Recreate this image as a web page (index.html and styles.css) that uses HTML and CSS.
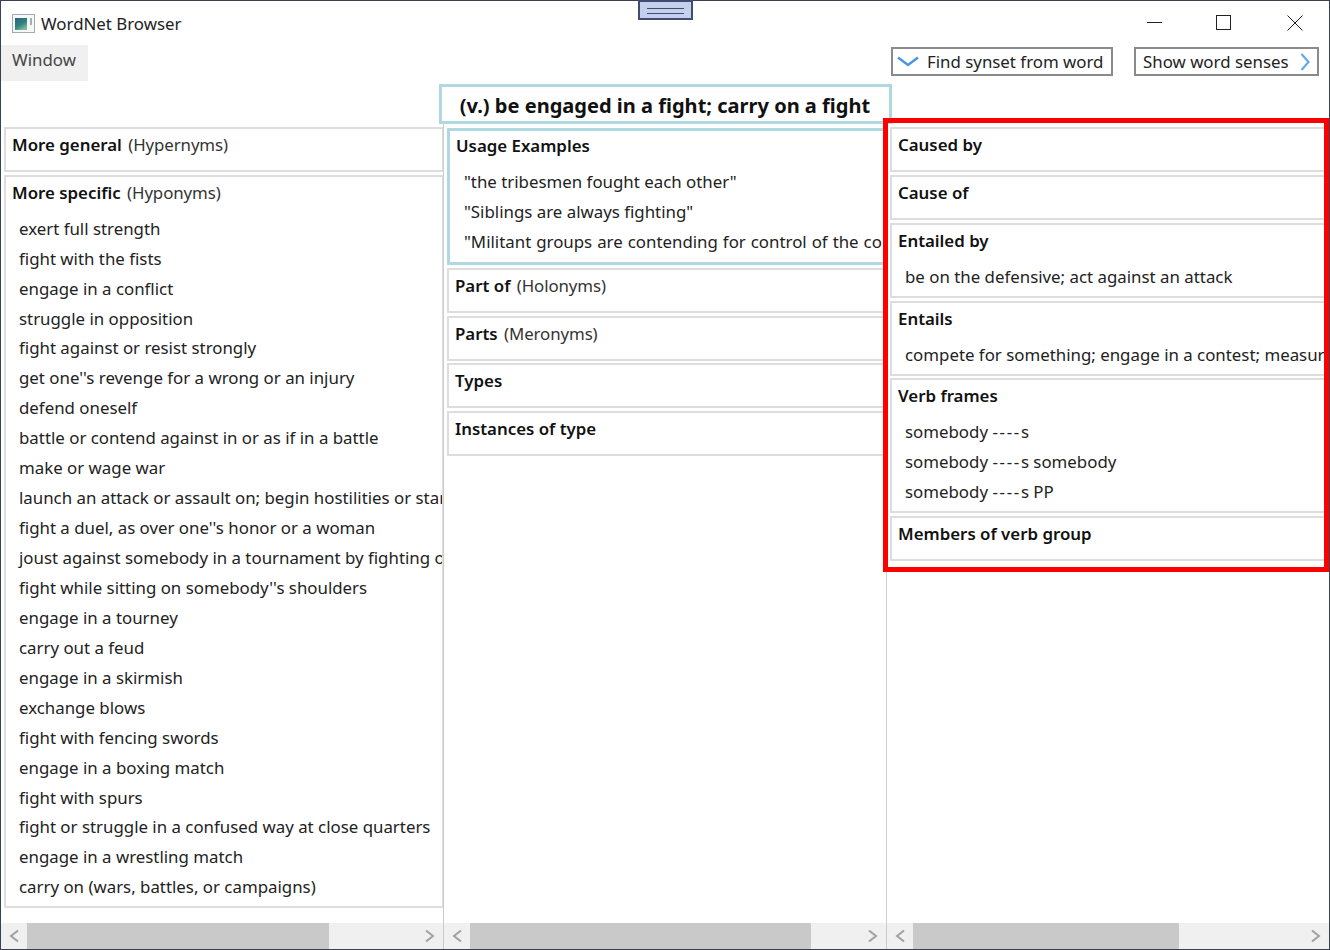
FILE: index.html
```html
<!DOCTYPE html>
<html lang="en">

<head>
    <meta charset="UTF-8">
    <title>WordNet Browser</title>
    <link rel="stylesheet" href="styles.css">
</head>

<body>
    <div class="window">
        <!-- Title bar -->
        <div class="title-bar">
            <svg class="app-icon" width="23" height="20" viewBox="0 0 23 20">
                <defs>
                    <linearGradient id="icon-fill" x1="0" y1="0" x2="0.6" y2="1">
                        <stop offset="0" stop-color="#2a5f8f"/>
                        <stop offset="0.6" stop-color="#2f8478"/>
                        <stop offset="1" stop-color="#7fb5a4"/>
                    </linearGradient>
                </defs>
                <rect x="0.5" y="0.5" width="22" height="18" fill="#f6f7f7" stroke="#a3abaf"/>
                <rect x="3" y="4" width="12" height="12" fill="url(#icon-fill)"/>
                <rect x="18" y="4" width="2" height="7" fill="#9fb3ae"/>
            </svg>
            <span class="app-name">WordNet Browser</span>
            <div class="window-buttons">
                <svg width="16" height="16" viewBox="0 0 16 16"><path d="M0 7.5H15" stroke="#222"/></svg>
                <svg class="maximize" width="16" height="16" viewBox="0 0 16 16"><rect x="0.5" y="0.5" width="14" height="14" fill="none" stroke="#222"/></svg>
                <svg width="16" height="16" viewBox="0 0 16 16"><path d="M0.5 0.5L15.5 15.5M15.5 0.5L0.5 15.5" stroke="#222"/></svg>
            </div>
        </div>

        <!-- Menu and buttons -->
        <div class="tool-row">
            <div class="menu-item">Window</div>
            <div class="tool-buttons">
                <button class="tool-button find-button">
                    <svg width="22" height="11" viewBox="0 0 22 11"><path d="M1 1.5L11 9L21 1.5" fill="none" stroke="#4a94e8" stroke-width="2.4"/></svg>
                    Find synset from word
                </button>
                <button class="tool-button senses-button">
                    Show word senses
                    <svg width="10" height="18" viewBox="0 0 10 18"><path d="M1.5 1L8.5 9L1.5 17" fill="none" stroke="#6aa6e8" stroke-width="2.2"/></svg>
                </button>
            </div>
        </div>

        <div class="gloss">(v.) be engaged in a fight; carry on a fight</div>

        <div class="columns">
            <!-- Left column -->
            <div class="column">
                <div class="column-body">
                    <div class="panel">
                        <div class="panel-head"><b>More general</b> <span class="note">(Hypernyms)</span></div>
                    </div>
                    <div class="panel hyponyms">
                        <div class="panel-head"><b>More specific</b> <span class="note">(Hyponyms)</span></div>
                        <ul class="panel-items">
                            <li>exert full strength</li>
                            <li>fight with the fists</li>
                            <li>engage in a conflict</li>
                            <li>struggle in opposition</li>
                            <li>fight against or resist strongly</li>
                            <li>get one''s revenge for a wrong or an injury</li>
                            <li>defend oneself</li>
                            <li>battle or contend against in or as if in a battle</li>
                            <li>make or wage war</li>
                            <li>launch an attack or assault on; begin hostilities or start warfare with</li>
                            <li>fight a duel, as over one''s honor or a woman</li>
                            <li>joust against somebody in a tournament by fighting on horseback</li>
                            <li>fight while sitting on somebody''s shoulders</li>
                            <li>engage in a tourney</li>
                            <li>carry out a feud</li>
                            <li>engage in a skirmish</li>
                            <li>exchange blows</li>
                            <li>fight with fencing swords</li>
                            <li>engage in a boxing match</li>
                            <li>fight with spurs</li>
                            <li>fight or struggle in a confused way at close quarters</li>
                            <li>engage in a wrestling match</li>
                            <li>carry on (wars, battles, or campaigns)</li>
                        </ul>
                    </div>
                </div>
                <div class="scrollbar">
                    <svg class="arrow" width="26" height="14" viewBox="0 0 26 14"><path d="M17 1.5L10 7L17 12.5" fill="none" stroke="#a0a0a0" stroke-width="2"/></svg>
                    <div class="thumb thumb-left"></div>
                    <svg class="arrow arrow-end" width="26" height="14" viewBox="0 0 26 14"><path d="M9 1.5L16 7L9 12.5" fill="none" stroke="#a0a0a0" stroke-width="2"/></svg>
                </div>
            </div>

            <!-- Middle column -->
            <div class="column">
                <div class="column-body">
                    <div class="panel usage-panel">
                        <div class="panel-head"><b>Usage Examples</b></div>
                        <ul class="panel-items">
                            <li>"the tribesmen fought each other"</li>
                            <li>"Siblings are always fighting"</li>
                            <li class="usage-long">"Militant groups are contending for control of the country"</li>
                        </ul>
                    </div>
                    <div class="panel">
                        <div class="panel-head"><b>Part of</b> <span class="note">(Holonyms)</span></div>
                    </div>
                    <div class="panel parts-panel">
                        <div class="panel-head"><b>Parts</b> <span class="note">(Meronyms)</span></div>
                    </div>
                    <div class="panel">
                        <div class="panel-head"><b>Types</b></div>
                    </div>
                    <div class="panel">
                        <div class="panel-head"><b>Instances of type</b></div>
                    </div>
                </div>
                <div class="scrollbar">
                    <svg class="arrow" width="26" height="14" viewBox="0 0 26 14"><path d="M17 1.5L10 7L17 12.5" fill="none" stroke="#a0a0a0" stroke-width="2"/></svg>
                    <div class="thumb thumb-middle"></div>
                    <svg class="arrow arrow-end" width="26" height="14" viewBox="0 0 26 14"><path d="M9 1.5L16 7L9 12.5" fill="none" stroke="#a0a0a0" stroke-width="2"/></svg>
                </div>
            </div>

            <!-- Right column -->
            <div class="column">
                <div class="column-body">
                    <div class="panel">
                        <div class="panel-head"><b>Caused by</b></div>
                    </div>
                    <div class="panel">
                        <div class="panel-head"><b>Cause of</b></div>
                    </div>
                    <div class="panel">
                        <div class="panel-head"><b>Entailed by</b></div>
                        <ul class="panel-items">
                            <li>be on the defensive; act against an attack</li>
                        </ul>
                    </div>
                    <div class="panel">
                        <div class="panel-head"><b>Entails</b></div>
                        <ul class="panel-items">
                            <li>compete for something; engage in a contest; measure oneself against others</li>
                        </ul>
                    </div>
                    <div class="panel frames-panel">
                        <div class="panel-head"><b>Verb frames</b></div>
                        <ul class="panel-items">
                            <li>somebody <span class="dashes">----</span>s</li>
                            <li>somebody <span class="dashes">----</span>s somebody</li>
                            <li>somebody <span class="dashes">----</span>s PP</li>
                        </ul>
                    </div>
                    <div class="panel">
                        <div class="panel-head"><b>Members of verb group</b></div>
                    </div>
                </div>
                <div class="scrollbar">
                    <svg class="arrow" width="26" height="14" viewBox="0 0 26 14"><path d="M17 1.5L10 7L17 12.5" fill="none" stroke="#a0a0a0" stroke-width="2"/></svg>
                    <div class="thumb thumb-right"></div>
                    <svg class="arrow arrow-end" width="26" height="14" viewBox="0 0 26 14"><path d="M9 1.5L16 7L9 12.5" fill="none" stroke="#a0a0a0" stroke-width="2"/></svg>
                </div>
            </div>
        </div>

        <!-- Overlays -->
        <div class="drag-handle"></div>
        <div class="highlight"></div>
    </div>
</body>

</html>
```

FILE: styles.css
```css
* {
    box-sizing: border-box;
}

html,
body {
    margin: 0;
    height: 950px;
    overflow: hidden;
}

body {
    font-family: "Noto Sans", sans-serif;
    font-size: 16.85px;
    color: #222;
    background-color: white;
}

.window {
    position: relative;
    display: flex;
    flex-direction: column;
    height: 950px;
    border: 1px solid #3a4152;
    background-color: white;
}

.title-bar {
    display: flex;
    align-items: center;
    height: 44px;
    padding-left: 11px;
    padding-top: 1px;
}

.app-name {
    margin-left: 6px;
    color: #222;
}

.window-buttons {
    display: flex;
    gap: 54px;
    margin-left: auto;
    margin-right: 26px;
    margin-bottom: 2px;
}

.maximize {
    margin: 0 1px 0 -1px;
}

.tool-row {
    display: flex;
    justify-content: space-between;
    height: 39px;
}

.menu-item {
    width: 87px;
    height: 36px;
    padding-left: 11px;
    line-height: 30px;
    color: #444;
    background-color: #f0f0f0;
}

.tool-buttons {
    display: flex;
    gap: 21px;
    margin-right: 10px;
    padding-top: 2px;
}

.tool-button {
    display: flex;
    align-items: center;
    height: 29px;
    padding: 0;
    font-family: inherit;
    font-size: 16.85px;
    color: #222;
    background-color: white;
    border: 2px solid #8a8a8a;
}

.find-button {
    width: 222px;
    gap: 8px;
    padding-left: 4px;
}

.senses-button {
    width: 185px;
    justify-content: space-between;
    padding: 0 7px;
}

.gloss {
    position: relative;
    z-index: 1;
    width: 453px;
    height: 40px;
    margin: 0 auto;
    font-size: 20.05px;
    font-weight: bold;
    line-height: 37px;
    text-align: center;
    color: #111;
    background-color: white;
    border: 3px solid #b0d8e0;
}

.columns {
    flex: 1;
    display: grid;
    grid-template-columns: 443px 443px 442px;
    min-height: 0;
}

.column {
    display: flex;
    flex-direction: column;
    min-width: 0;
    border-right: 1px solid #ccc;
}

.column:last-child {
    border-right: none;
}

.column-body {
    flex: 1;
    display: flex;
    flex-direction: column;
    gap: 3px;
    padding: 3px 0 0 3px;
    overflow: hidden;
}

.panel {
    flex: none;
    min-height: 45px;
    border: 2px solid #ddd;
    border-right-width: 1px;
}

.panel-head {
    height: 37px;
    padding: 0 6px;
    line-height: 32px;
    color: #333;
    white-space: nowrap;
}

.panel-head b {
    color: #111;
    font-weight: 600;
    margin-right: 2px;
}

.note {
    letter-spacing: -0.1px;
}

.panel-items {
    list-style: none;
    margin: 0;
    padding: 0 0 4px 13px;
    white-space: nowrap;
    overflow: hidden;
}

.panel-items li {
    height: 29.9px;
    line-height: 29.9px;
}

.dashes {
    letter-spacing: 1.7px;
}

.hyponyms .panel-head {
    margin-bottom: -0.3px;
}

.hyponyms .panel-items li {
    height: 29.953px;
}

.frames-panel {
    margin: -0.5px 0 0.5px;
}

.parts-panel {
    margin-bottom: -0.5px;
}

.usage-panel {
    margin-top: 1px;
    margin-bottom: 0.3px;
    border: 3px solid #b0d8e0;
}

.usage-panel .panel-head {
    height: 36.4px;
    padding-left: 6px;
    line-height: 29px;
}

.usage-panel .panel-items {
    padding: 0 0 4.6px 14px;
}

.usage-long {
    word-spacing: 0.6px;
}

.scrollbar {
    flex: none;
    display: flex;
    align-items: center;
    height: 26px;
    background-color: #f0f0f0;
}

.arrow {
    flex: none;
}

.arrow-end {
    margin-left: auto;
}

.thumb {
    height: 100%;
    background-color: #c9c9c9;
}

.thumb-left {
    width: 302px;
}

.thumb-middle {
    width: 341px;
}

.thumb-right {
    width: 266px;
}

.drag-handle {
    position: absolute;
    top: -1px;
    left: 637px;
    width: 55px;
    height: 20px;
    background-color: #c5d0ec;
    border: 2px solid #414c70;
}

.drag-handle::after {
    content: "";
    display: block;
    height: 4px;
    margin: 6px 7px 0;
    border-top: 1px solid #414c70;
    border-bottom: 1px solid #414c70;
}

.highlight {
    position: absolute;
    z-index: 2;
    top: 117px;
    left: 882px;
    width: 446px;
    height: 454px;
    border: 5px solid #f00;
}
```
